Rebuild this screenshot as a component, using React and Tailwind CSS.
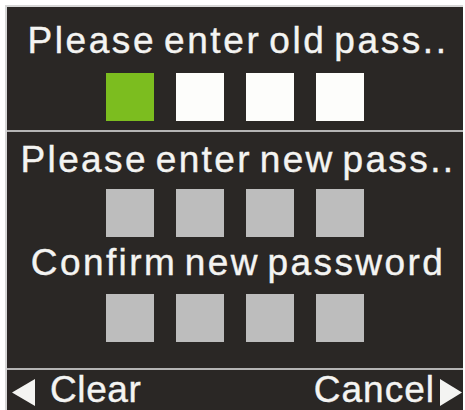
import React from "react";

function Squares({ colors, className }) {
  return (
    <div className={"flex justify-center gap-[22px] " + className}>
      {colors.map((c, i) => (
        <div key={i} className={"w-[48px] h-[48px] " + c} />
      ))}
    </div>
  );
}

const label = "ml-[6px] text-[37px] leading-[36px] tracking-[2.4px] [word-spacing:-5px] whitespace-nowrap [-webkit-text-stroke:0.4px_#f4f4f2]";

export default function App() {
  return (
    <div className="w-[465px] h-[410px] bg-white pl-[5px] pt-[5px] pr-[2px] overflow-hidden font-['Liberation_Sans',Arial,sans-serif]">
      <div className="h-[405px] bg-[#2a2725] border-l-2 border-t-2 border-[#d6d6d6] flex flex-col text-[#f4f4f2]">
        {/* Section 1 */}
        <div className="h-[123px] pt-[16px] flex flex-col items-center">
          <div className={"tracking-[2.6px] " + label}>Please enter old pass..</div>
          <Squares className="mt-[14px]" colors={["bg-[#7cbd1f]", "bg-[#fdfdfb]", "bg-[#fdfdfb]", "bg-[#fdfdfb]"]} />
        </div>
        <div className="h-[2px] bg-[#b5b5b5]" />
        {/* Section 2 */}
        <div className="h-[236px] pt-[10px] flex flex-col items-center">
          <div className={label}>Please enter new pass..</div>
          <Squares className="mt-[11px]" colors={["bg-[#bdbdbd]", "bg-[#bdbdbd]", "bg-[#bdbdbd]", "bg-[#bdbdbd]"]} />
          <div className={"mt-[8px] " + label}>Confirm new password</div>
          <Squares className="mt-[13px]" colors={["bg-[#bdbdbd]", "bg-[#bdbdbd]", "bg-[#bdbdbd]", "bg-[#bdbdbd]"]} />
        </div>
        <div className="h-[2px] bg-[#b5b5b5]" />
        {/* Bottom bar */}
        <div className="flex-1 flex items-start justify-between pt-[2px] pl-[5px] pr-[1px]">
          <div className="flex items-center">
            <svg width="23" height="27" viewBox="0 0 23 27" className="mt-[5px]">
              <polygon points="0,13.5 23,0 23,27" fill="#f4f4f2" />
            </svg>
            <span className="ml-[15px] text-[37px] leading-[36px] tracking-[0.6px] [-webkit-text-stroke:0.4px_#f4f4f2]">Clear</span>
          </div>
          <div className="flex items-center">
            <span className="text-[37px] leading-[36px] tracking-[1px] [-webkit-text-stroke:0.4px_#f4f4f2]">Cancel</span>
            <svg width="22" height="27" viewBox="0 0 22 27" className="ml-[5px] mt-[4px]">
              <polygon points="0,0 22,13.5 0,27" fill="#f4f4f2" />
            </svg>
          </div>
        </div>
      </div>
    </div>
  );
}
